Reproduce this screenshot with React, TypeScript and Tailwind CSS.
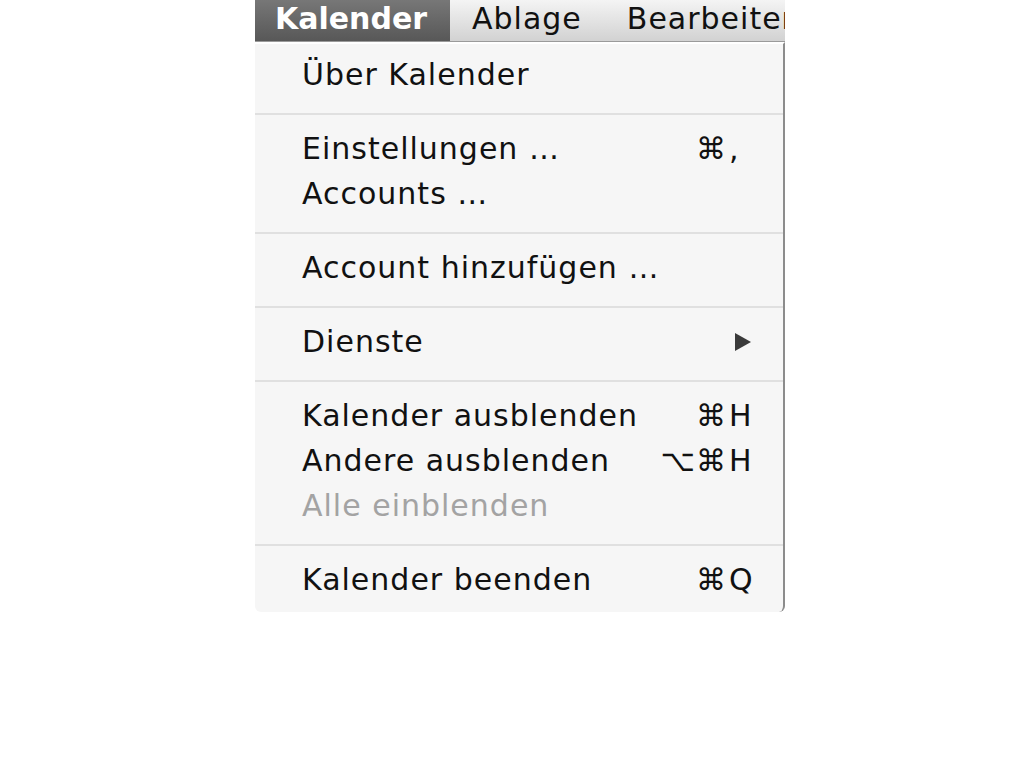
import React from 'react';

interface MenuItem {
  label: string;
  mod?: string;
  key?: string;
  submenu?: boolean;
  disabled?: boolean;
}

const groups: MenuItem[][] = [
  [{ label: 'Über Kalender' }],
  [
    { label: 'Einstellungen …', mod: '⌘', key: ',' },
    { label: 'Accounts …' }
  ],
  [{ label: 'Account hinzufügen …' }],
  [{ label: 'Dienste', submenu: true }],
  [
    { label: 'Kalender ausblenden', mod: '⌘', key: 'H' },
    { label: 'Andere ausblenden', mod: '⌥⌘', key: 'H' },
    { label: 'Alle einblenden', disabled: true }
  ],
  [{ label: 'Kalender beenden', mod: '⌘', key: 'Q' }]
];

const font = { fontFamily: '"DejaVu Sans", "Liberation Sans", sans-serif' };

const Row: React.FC<{ item: MenuItem }> = ({ item }) => (
  <div
    className={`flex h-[45px] items-center pl-[47px] pr-[26px] text-[30px] leading-none tracking-[1px] ${
      item.disabled ? 'text-[#a3a3a3]' : 'text-[#111]'
    }`}
  >
    <span className="flex-1 whitespace-nowrap">{item.label}</span>
    {item.mod && (
      <span className="flex items-center">
        <span className="w-[72px] text-right">{item.mod}</span>
        <span className="w-[30px] pl-[2px]">{item.key}</span>
      </span>
    )}
    {item.submenu && (
      <svg width="18" height="20" viewBox="0 0 18 20" className="mr-[5px]">
        <path d="M1 1 L17 10 L1 19 Z" fill="#3a3a3a" />
      </svg>
    )}
  </div>
);

export default function App() {
  return (
    <div className="min-h-screen bg-white" style={font}>
      <div className="ml-[255px] w-[530px] overflow-hidden">
        {/* menu bar, cut at the right like the screenshot */}
        <div className="flex h-[42px] items-center overflow-hidden whitespace-nowrap border-b border-[#9a9a9a] bg-gradient-to-b from-[#f4f4f4] to-[#d2d2d2] pb-[4px] text-[30px] tracking-[1px] text-[#111]">
          <div className="-mb-[4px] flex h-[42px] w-[195px] shrink-0 items-center bg-gradient-to-b from-[#777] to-[#575757] pb-[4px] pl-[20px] font-bold tracking-normal text-white">
            Kalender
          </div>
          <div className="ml-[22px] shrink-0">Ablage</div>
          <div className="ml-[45px] shrink-0">Bearbeiten</div>
        </div>
        <div className="rounded-b-[6px] border-t-2 border-r-2 border-t-white border-r-[#8c8c8c] bg-[#f6f6f6] pt-[8px] pb-[10px]">
          {groups.map((group, gi) => (
            <div key={gi}>
              {gi > 0 && <div className="mt-[16px] mb-[11px] h-[2px] bg-[#e0e0e0]" />}
              {group.map((item) => (
                <Row key={item.label} item={item} />
              ))}
            </div>
          ))}
        </div>
      </div>
    </div>
  );
}
